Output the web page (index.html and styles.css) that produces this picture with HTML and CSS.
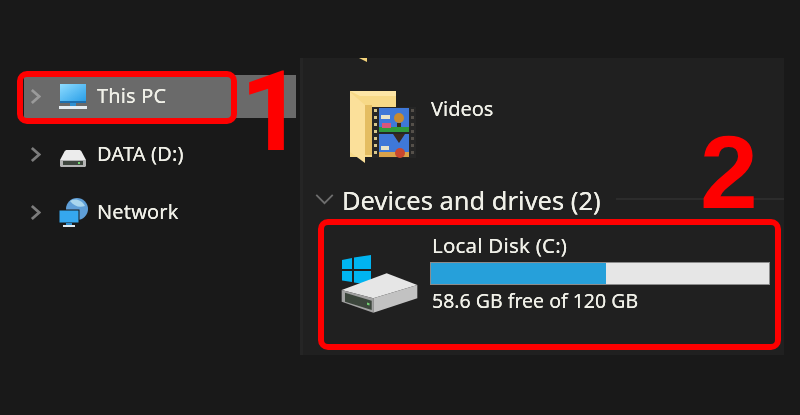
FILE: index.html
```html
<!DOCTYPE html>
<html lang="en">
<head>
    <meta charset="UTF-8">
    <meta name="viewport" content="width=device-width, initial-scale=1.0">
    <title>This PC - Local Disk</title>
    <link rel="stylesheet" href="styles.css">
</head>
<body>
    <div class="explorer">
        <!-- Navigation tree -->
        <nav class="sidebar">
            <div class="nav-row selected">
                <svg class="chevron" viewBox="0 0 12 18"><path d="M2 2l8 7-8 7"/></svg>
                <svg class="nav-icon" viewBox="0 0 30 30">
                    <defs>
                        <linearGradient id="screen" x1="0" y1="0" x2="1" y2="1">
                            <stop offset="0" stop-color="#8fdcff"/>
                            <stop offset="1" stop-color="#2a9fe8"/>
                        </linearGradient>
                    </defs>
                    <rect x="2" y="2" width="26" height="17" fill="url(#screen)"/>
                    <rect x="2" y="19" width="26" height="2" fill="#1d6fae"/>
                    <rect x="12" y="21" width="6" height="3" fill="#2f8fd0"/>
                    <rect x="1" y="24" width="28" height="3" fill="#e6edf2"/>
                </svg>
                <span>This PC</span>
            </div>
            <div class="nav-row">
                <svg class="chevron" viewBox="0 0 12 18"><path d="M2 2l8 7-8 7"/></svg>
                <svg class="nav-icon" viewBox="0 0 30 30">
                    <path d="M9 10h12c1 0 2 .5 2.500 1.500L28 20v5c0 1-1 2-2 2H4c-1 0-2-1-2-2v-5l4.500-8.500C7 10.500 8 10 9 10z" fill="#ececec"/>
                    <path d="M2 20h26v5c0 1-1 2-2 2H4c-1 0-2-1-2-2z" fill="#b4b4b4"/>
                    <rect x="5" y="21" width="20" height="4" fill="#3e463e"/>
                    <rect x="20" y="22" width="2" height="2" fill="#6fd06f"/>
                </svg>
                <span>DATA (D:)</span>
            </div>
            <div class="nav-row">
                <svg class="chevron" viewBox="0 0 12 18"><path d="M2 2l8 7-8 7"/></svg>
                <svg class="nav-icon" viewBox="0 0 30 30">
                    <circle cx="19" cy="11" r="11" fill="#5f9fd8"/>
                    <path d="M12 3c5-3 12-1 15 5-6 2-11 0-15-5z" fill="#a9d6ee"/>
                    <rect x="1" y="12" width="20" height="13" fill="#35a7ee" stroke="#191919"/>
                    <rect x="8" y="25" width="6" height="2" fill="#2f8fd0"/>
                    <rect x="5" y="27" width="12" height="2" fill="#dfe8ee"/>
                </svg>
                <span>Network</span>
            </div>
        </nav>

        <!-- Content pane -->
        <main class="pane">
            <div class="scrolled-corner"></div>
            <div class="folder-item">
                <svg class="folder-icon" viewBox="0 0 66 76">
                    <path d="M0 1h46v66H0z" fill="#f7d987"/>
                    <path d="M0 1h46v5H10z" fill="#fde6a6"/>
                    <path d="M0 2l15 13v58L0 62z" fill="#fbe09a"/>
                    <path d="M15 15h7v50h-7z" fill="#e4bd62"/>
                    <!-- film strip -->
                    <rect x="22" y="17" width="44" height="51" fill="#262626"/>
                    <rect x="29" y="18" width="30" height="24" fill="#3f78d8"/>
                    <rect x="29" y="44" width="30" height="23" fill="#3f78d8"/>
                    <rect x="29" y="37" width="30" height="5" fill="#2f9a3c"/>
                    <rect x="29" y="62" width="30" height="5" fill="#d9a24a"/>
                    <rect x="31" y="25" width="9" height="4" fill="#e8e4c8"/>
                    <rect x="32" y="33" width="9" height="5" fill="#d9557a"/>
                    <rect x="31" y="56" width="8" height="4" fill="#e8e4c8"/>
                    <circle cx="49" cy="28" r="5" fill="#c98a2f"/>
                    <rect x="47" y="33" width="4" height="4" fill="#3a2a1a"/>
                    <path d="M43 44h12l-6 9z" fill="#3a2a20"/>
                    <circle cx="50" cy="63" r="5" fill="#c9472f"/>
                    <path d="M24 19h3v3h-3zM24 26h3v3h-3zM24 33h3v3h-3zM24 40h3v3h-3zM24 47h3v3h-3zM24 54h3v3h-3zM24 61h3v3h-3z" fill="#d8c68a"/>
                    <path d="M61 19h3v3h-3zM61 26h3v3h-3zM61 33h3v3h-3zM61 40h3v3h-3zM61 47h3v3h-3zM61 54h3v3h-3zM61 61h3v3h-3z" fill="#55504a"/>
                </svg>
                <span class="folder-name">Videos</span>
            </div>

            <div class="group-header">
                <svg class="group-chevron" viewBox="0 0 20 12"><path d="M1 1l9 9 9-9"/></svg>
                <span class="group-title">Devices and drives (2)</span>
                <div class="group-line"></div>
            </div>

            <div class="drive">
                <svg class="drive-icon" viewBox="0 0 80 60">
                    <g fill="#00b4f0">
                        <path d="M2 5l10-2v11H2z"/>
                        <path d="M14 2.500L31 0v14H14z"/>
                        <path d="M2 16h10v11L2 25.500z"/>
                        <path d="M14 16h17v14l-17-2.500z"/>
                    </g>
                    <path d="M1.700 35L46.700 18.300 77.300 30 33.300 43.300z" fill="#e6e6e6"/>
                    <path d="M33.300 43.300L77.300 30v13.300L33.300 57.700z" fill="#c2c2c2"/>
                    <path d="M1.700 35l31.600 8.300v14.400L1.700 46.700z" fill="#a2a2a2"/>
                    <path d="M5 37.700l26.700 8V55L5 46.700z" fill="#3c463c"/>
                    <path d="M27 47.500l2.500.7v2.300l-2.500-.7z" fill="#6fd06f"/>
                </svg>
                <div class="drive-info">
                    <div class="drive-name">Local Disk (C:)</div>
                    <div class="usage-bar"><div class="usage-fill" style="width: 51.8%"></div></div>
                    <div class="drive-free">58.6 GB free of 120 GB</div>
                </div>
            </div>
        </main>
    </div>

    <!-- Red annotations on top of the screenshot -->
    <div class="mark mark-pc"></div>
    <div class="mark mark-drive"></div>
    <div class="step step-1">1</div>
    <div class="step step-2">2</div>
</body>
</html>
```

FILE: styles.css
```css
/* Base styles */
body {
    margin: 0;
    width: 800px;
    height: 415px;
    overflow: hidden;
    position: relative;
    background-color: #191919;
    color: #f0f0e8;
    font-family: 'Noto Sans', 'Open Sans', sans-serif;
    text-shadow: 0 0 0.6px #f0f0e8;
}

.explorer {
    display: flex;
    height: 355px;
}

/* Navigation tree */
.sidebar {
    width: 300px;
    padding: 75px 4px 0 24px;
    box-sizing: border-box;
    display: flex;
    flex-direction: column;
    gap: 15px;
}

.nav-row {
    height: 43px;
    display: flex;
    align-items: center;
    padding-left: 6px;
    font-size: 20px;
    letter-spacing: 0.15px;
    filter: blur(0.4px);
}

.nav-row span {
    margin-bottom: 2px;
}

.nav-row.selected {
    background-color: #6a6a6a;
}

.chevron {
    width: 11px;
    height: 17px;
    margin-right: 17px;
    flex-shrink: 0;
}

.chevron path {
    fill: none;
    stroke: #7c7c7c;
    stroke-width: 3;
}

.selected .chevron path {
    stroke: #9a9a9a;
}

.nav-icon {
    width: 30px;
    height: 30px;
    margin-right: 9px;
    flex-shrink: 0;
}

/* Content pane */
.pane {
    position: relative;
    width: 484px;
    margin-top: 58px;
    box-sizing: border-box;
    background-color: #202020;
    border-left: 3px solid #252525;
    padding: 32px 0 0 12px;
}

.scrolled-corner {
    position: absolute;
    left: 56px;
    top: 0;
    width: 8px;
    height: 4px;
    background-color: #f3d27a;
    clip-path: polygon(0 0, 100% 0, 100% 100%);
}

.folder-item {
    display: flex;
    align-items: flex-start;
    padding-left: 35px;
    height: 92px;
    filter: blur(0.4px);
}

.folder-icon {
    width: 66px;
    height: 76px;
    flex-shrink: 0;
}

.folder-name {
    margin-left: 15px;
    margin-top: 5px;
    font-size: 20px;
}

.group-header {
    display: flex;
    align-items: center;
    height: 34px;
    filter: blur(0.4px);
}

.group-chevron {
    width: 19px;
    height: 11px;
    margin-right: 8px;
    flex-shrink: 0;
}

.group-chevron path {
    fill: none;
    stroke: #6e6e6e;
    stroke-width: 2;
}

.group-title {
    font-size: 25.500px;
    white-space: nowrap;
    margin-top: 2px;
}

.group-line {
    flex: 1;
    height: 2px;
    margin-left: 15px;
    background-color: #2c2c2c;
}

/* Drive tile */
.drive {
    display: flex;
    padding: 16px 0 0 25px;
    filter: blur(0.4px);
}

.drive-icon {
    width: 80px;
    height: 60px;
    margin-top: 23px;
    flex-shrink: 0;
}

.drive-info {
    margin-left: 10px;
    width: 340px;
}

.drive-name,
.drive-free {
    font-size: 19.500px;
    line-height: 26px;
    padding-left: 2px;
}

.drive-name {
    font-size: 20.500px;
    letter-spacing: 0.2px;
}

.usage-bar {
    height: 21px;
    margin: 4px 0 3px;
    border: 1px solid #8c8c8c;
    background-color: #e6e6e6;
}

.usage-fill {
    height: 100%;
    background-color: #26a0da;
}

/* Annotations */
.mark {
    position: absolute;
    box-sizing: border-box;
    border: 6px solid #fe0000;
    border-radius: 10px;
}

.mark-pc {
    left: 17px;
    top: 71px;
    width: 220px;
    height: 53px;
}

.mark-drive {
    left: 318px;
    top: 219px;
    width: 463px;
    height: 131px;
}

.step {
    position: absolute;
    color: #fe0000;
    font-family: 'Liberation Sans', Arial, sans-serif;
    font-weight: bold;
    line-height: 1;
    text-shadow: none;
}

.step-1 {
    left: 240px;
    top: 56px;
    font-family: Roboto, 'Liberation Sans', sans-serif;
    font-size: 112px;
}

.step-2 {
    left: 700px;
    top: 120px;
    font-size: 104px;
}
```
